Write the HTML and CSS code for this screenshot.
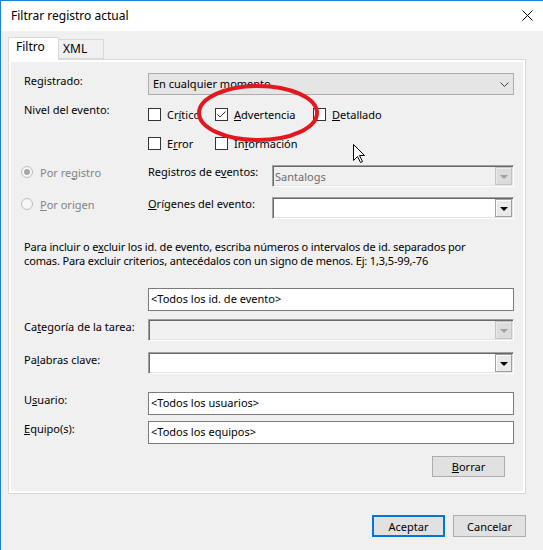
FILE: index.html
```html
<!DOCTYPE html>
<html>
<head>
    <meta charset="UTF-8">
    <title>Filtrar registro actual</title>
    <link rel="stylesheet" href="styles.css">
</head>
<body>
<div class="window">
    <div class="titlebar">
        <span class="title">Filtrar registro actual</span>
        <svg class="close" width="11" height="11" viewBox="0 0 11 11"><path d="M0.5 0.5 L10.5 10.5 M10.5 0.5 L0.5 10.5" stroke="#000" stroke-width="1" fill="none"/></svg>
    </div>

    <div class="tabs">
        <div class="tab active">Filtro</div>
        <div class="tab">XML</div>
    </div>

    <div class="panel">
        <div class="row row-combo">
            <span class="lbl">Re<u>g</u>istrado:</span>
            <div class="combo flat">
                <span>En cualquier momento</span>
                <svg class="chev" width="9" height="5" viewBox="0 0 9 5"><polyline points="0.5,0.5 4.5,4.5 8.5,0.5" stroke="#444" fill="none"/></svg>
            </div>
        </div>

        <div class="row row-checks">
            <span class="lbl lbl-up">Nivel del evento:</span>
            <div class="checks">
                <span class="check"><span class="box"></span><span>Cr<u>í</u>tico</span></span>
                <span class="check"><span class="box"><svg width="11" height="11" viewBox="0 0 11 11"><polyline points="1.5,5.5 4,8 9.5,2.5" stroke="#333" stroke-width="1" fill="none"/></svg></span><span><u>A</u>dvertencia</span></span>
                <span class="check"><span class="box"></span><span><u>D</u>etallado</span></span>
            </div>
        </div>
        <div class="row row-checks">
            <span class="lbl"></span>
            <div class="checks">
                <span class="check"><span class="box"></span><span>E<u>r</u>ror</span></span>
                <span class="check"><span class="box"></span><span>In<u>f</u>ormación</span></span>
            </div>
        </div>

        <div class="row row-source first">
            <span class="radio checked"><span class="circle"></span><span>Por re<u>g</u>istro</span></span>
            <span class="lbl">Registros de e<u>v</u>entos:</span>
            <div class="combo sunken disabled"><span>Santalogs</span><span class="dd-btn"><i></i></span></div>
        </div>
        <div class="row row-source">
            <span class="radio"><span class="circle"></span><span><u>P</u>or origen</span></span>
            <span class="lbl"><u>O</u>rígenes del evento:</span>
            <div class="combo sunken"><span></span><span class="dd-btn"><i></i></span></div>
        </div>

        <p class="help">Para incluir o e<u>x</u>cluir los id. de evento, escriba números o intervalos de id. separados por<br>comas. Para excluir criterios, antecédalos con un signo de menos. Ej: 1,3,5-99,-76</p>

        <div class="row row-ids">
            <span class="lbl"></span>
            <div class="textbox">&lt;Todos los id. de evento&gt;</div>
        </div>
        <div class="row row-cat">
            <span class="lbl">Ca<u>t</u>egoría de la tarea:</span>
            <div class="combo sunken disabled"><span></span><span class="dd-btn"><i></i></span></div>
        </div>
        <div class="row row-keys">
            <span class="lbl">Pa<u>l</u>abras clave:</span>
            <div class="combo sunken"><span></span><span class="dd-btn"><i></i></span></div>
        </div>
        <div class="row row-user">
            <span class="lbl">U<u>s</u>uario:</span>
            <div class="textbox">&lt;Todos los usuarios&gt;</div>
        </div>
        <div class="row row-pc">
            <span class="lbl"><u>E</u>quipo(s):</span>
            <div class="textbox">&lt;Todos los equipos&gt;</div>
        </div>
        <div class="row row-clear">
            <button class="btn"><u>B</u>orrar</button>
        </div>
    </div>

    <div class="actions">
        <button class="btn default">Aceptar</button>
        <button class="btn">Cancelar</button>
    </div>

    <svg class="mark" width="130" height="66" viewBox="0 0 130 66"><ellipse cx="63" cy="33" rx="59" ry="27" stroke="#e3171f" stroke-width="4" fill="none"/></svg>
    <svg class="pointer" width="13" height="20" viewBox="0 0 13 20"><path d="M0.5 0.5 V16.5 L4.5 12.5 L7.5 18.5 L9.5 17.5 L6.5 11.5 H11.5 Z" fill="#fff" stroke="#000" stroke-width="1"/></svg>
</div>
</body>
</html>
```

FILE: styles.css
```css
* {
    box-sizing: border-box;
}
body {
    margin: 0;
    background-color: #f0f0f0;
    font-family: "Noto Sans", "Liberation Sans", sans-serif;
    font-size: 11px;
    color: #000;
}
.window {
    position: relative;
    width: 543px;
    height: 550px;
    border-top: 1px solid #1883d7;
    border-left: 1px solid #1883d7;
    background-color: #f0f0f0;
    overflow: hidden;
}
.titlebar {
    height: 30px;
    background-color: #fff;
    display: flex;
    align-items: center;
    justify-content: space-between;
    padding: 0 10px 1px 10px;
    font-size: 12px;
}

/* tabs */
.tabs {
    display: flex;
    align-items: flex-end;
    height: 22px;
    margin-top: 6px;
    padding-left: 7px;
    font-size: 12px;
}
.tab {
    border: 1px solid #d9d9d9;
    line-height: 18px;
    height: 20px;
    width: 45px;
    padding-left: 4px;
    border-left: none;
    background-color: #f0f0f0;
}
.tab.active {
    position: relative;
    z-index: 1;
    width: 51px;
    height: 23px;
    margin-bottom: -1px;
    padding-left: 7px;
    border-left: 1px solid #d9d9d9;
    border-bottom: none;
    background-color: #fff;
}
.panel {
    width: 518px;
    height: 435px;
    margin-left: 7px;
    border: 1px solid #d9d9d9;
    box-shadow: inset 0 0 0 2px #fff;
    padding: 13px 11px 0 15px;
}

/* rows */
.row {
    display: flex;
    align-items: flex-start;
}
.lbl {
    width: 124px;
    flex: none;
    line-height: 16px;
}
.lbl-up {
    margin-top: -3px;
}
.row-combo { height: 22px; }
.row-checks {
    height: 19px;
    margin-top: 10px;
    align-items: center;
}
.row-checks .lbl { align-self: flex-start; }
.checks {
    display: grid;
    grid-template-columns: 67px 98px auto;
    align-items: center;
}
.check {
    display: flex;
    align-items: center;
    gap: 6px;
    line-height: 16px;
}
.box {
    width: 13px;
    height: 13px;
    border: 1px solid #333;
    background-color: #fff;
    display: flex;
}
.row-source { height: 22px; margin-top: 10px; }
.row-source.first { margin-top: 12px; }
.row-source .lbl { margin-top: -1px; }
.radio {
    width: 127px;
    margin-left: -3px;
    margin-top: -1px;
    flex: none;
    height: 16px;
    display: flex;
    align-items: center;
    gap: 7px;
    color: #838383;
}
.circle {
    width: 12px;
    height: 12px;
    border-radius: 50%;
    border: 1px solid #bcbcbc;
    background-color: #f7f7f7;
    display: flex;
    align-items: center;
    justify-content: center;
}
.radio.checked .circle::after {
    content: "";
    width: 6px;
    height: 6px;
    border-radius: 50%;
    background-color: #a8a8a8;
}
.help {
    margin: 21px 0 0 0;
    line-height: 14px;
    letter-spacing: -0.15px;
}
.row-ids { margin-top: 20px; }
.row-cat { margin-top: 8px; }
.row-keys { margin-top: 11px; }
.row-user { margin-top: 18px; }
.row-pc { margin-top: 6px; }
.row-clear {
    margin-top: 12px;
    justify-content: flex-end;
    padding-right: 9px;
}

/* fields */
.combo {
    flex: 1;
    height: 22px;
    display: flex;
    align-items: center;
    justify-content: space-between;
}
.combo.flat {
    background-color: #e5e5e5;
    border: 1px solid #adadad;
    padding: 0 4px 1px 4px;
}
.chev { margin-top: 1px; }
.combo.sunken {
    background-color: #fff;
    border: 1px solid;
    border-color: #a0a0a0 #fff #fff #a0a0a0;
    box-shadow: inset 1px 1px 0 #696969, inset -1px -1px 0 #e3e3e3;
    padding: 0 1px 0 2px;
}
.combo.disabled {
    background-color: #f0f0f0;
    color: #6d6d6d;
}
.dd-btn {
    width: 17px;
    height: 18px;
    border: 1px solid #a0a0a0;
    background-color: #e9e9e9;
    box-shadow: inset 1px 1px 0 #fff;
    display: flex;
    align-items: center;
    justify-content: center;
}
.dd-btn i {
    width: 0;
    height: 0;
    margin-top: 1px;
    border-left: 4px solid transparent;
    border-right: 4px solid transparent;
    border-top: 4px solid #000;
}
.disabled .dd-btn {
    border-color: #c4c4c4;
    background-color: #dcdcdc;
    box-shadow: inset 1px 1px 0 #e9e9e9;
}
.disabled .dd-btn i {
    border-top-color: #a0a0a0;
}
.textbox {
    flex: 1;
    height: 23px;
    background-color: #fff;
    border: 1px solid #7a7a7a;
    padding-left: 2px;
    line-height: 20px;
}

/* buttons */
.btn {
    font-family: "Noto Sans", "Liberation Sans", sans-serif;
    font-size: 11px;
    color: #000;
    width: 73px;
    height: 21px;
    padding: 0;
    background-color: #e1e1e1;
    border: 1px solid #adadad;
}
.actions {
    display: flex;
    justify-content: flex-end;
    gap: 8px;
    margin-top: 21px;
    padding-right: 17px;
}
.actions .btn { height: 22px; }
.btn.default { border: 2px solid #0078d7; }

/* annotation drawn over the dialog */
.mark {
    position: absolute;
    left: 194px;
    top: 79px;
}
.pointer {
    position: absolute;
    left: 352px;
    top: 143px;
}
```
